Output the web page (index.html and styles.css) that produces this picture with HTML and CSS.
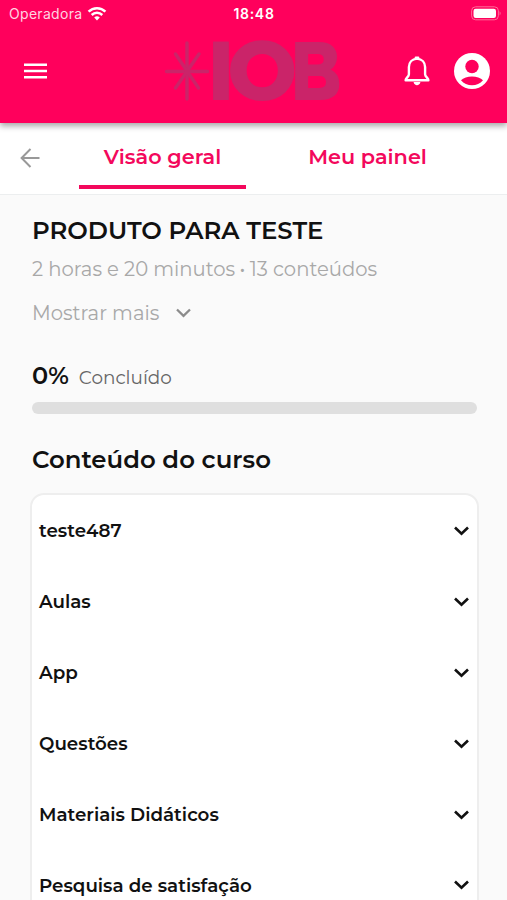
FILE: index.html
```html
<!DOCTYPE html>
<html lang="pt-BR">
<head>
    <meta charset="UTF-8">
    <meta name="viewport" content="width=device-width, initial-scale=1.0">
    <title>IOB - Curso</title>
    <link rel="stylesheet" href="styles.css">
</head>
<body>
    <header class="header">
        <div class="status-bar">
            <div class="carrier">
                <span>Operadora</span>
                <svg width="20" height="15" viewBox="0 0 20 15" fill="none" stroke="#fff" stroke-width="2.5">
                    <path d="M1.6 5.6a12 12 0 0 1 16.8 0"/>
                    <path d="M4.7 9a7.6 7.6 0 0 1 10.6 0"/>
                    <path d="M10 14.4l-2.8-2.9a4 4 0 0 1 5.6 0z" fill="#fff" stroke="none"/>
                </svg>
            </div>
            <span class="clock">18:48</span>
            <svg class="battery" width="31" height="15" viewBox="0 0 31 15">
                <rect x=".6" y=".8" width="26.8" height="13" rx="4" fill="none" stroke="#ff6b99" stroke-width="1"/>
                <rect x="2.5" y="2.7" width="22.5" height="9.2" rx="2.2" fill="#fff"/>
                <path d="M28.6 5.2q2 2.1 0 4.2z" fill="#ff6b99"/>
            </svg>
        </div>
        <div class="nav-bar">
            <button class="icon-btn" aria-label="Menu">
                <svg width="23" height="16" viewBox="0 0 23 16" stroke="#fff" stroke-width="2.5">
                    <path d="M0 1.7h23M0 8h23M0 14.3h23"/>
                </svg>
            </button>
            <svg class="logo" width="180" height="88" viewBox="0 0 180 88">
                <g fill="none" stroke="#ca2469" stroke-width="3.4" stroke-linecap="round">
                    <path d="M23 16v56M2.5 44.5h41"/>
                    <path d="M11.5 27l23 34M35 27L11.5 61"/>
                </g>
                <g class="logo-text">
                    <text x="43.5" y="73" textLength="27" lengthAdjust="spacingAndGlyphs">I</text>
                    <text x="63.2" y="73" textLength="70" lengthAdjust="spacingAndGlyphs">O</text>
                    <text x="126.5" y="73" textLength="51" lengthAdjust="spacingAndGlyphs">B</text>
                </g>
            </svg>
            <div class="actions">
                <button class="icon-btn" aria-label="Notificações">
                    <svg width="28" height="32" viewBox="0 0 28 32" fill="none" stroke="#fff" stroke-width="2.4" stroke-linejoin="round">
                        <path d="M14 3.6C8.9 4 6 7.4 5.9 12v7.2c0 2.6-3.3 3.6-3.3 6.1h22.8c0-2.5-3.3-3.5-3.3-6.1V12C22 7.4 19.1 4 14 3.6z"/>
                        <path d="M12.8 2.8h2.4z"/>
                        <path d="M10.6 27h6.8c-.5 4.2-6.3 4.2-6.8 0z" fill="#fff" stroke="none"/>
                    </svg>
                </button>
                <button class="icon-btn" aria-label="Perfil">
                    <svg width="36" height="36" viewBox="0 0 36 36">
                        <circle cx="18" cy="18" r="18" fill="#fff"/>
                        <circle cx="18" cy="13.5" r="6.7" fill="#ff005c"/>
                        <path d="M7 27.3c4.5-5.2 17.5-5.2 22 0-5.2 6.6-16.8 6.6-22 0z" fill="#ff005c"/>
                    </svg>
                </button>
            </div>
        </div>
    </header>

    <nav class="tabs">
        <button class="back" aria-label="Voltar">
            <svg width="20" height="20" viewBox="0 0 20 20" fill="none" stroke="#999" stroke-width="2">
                <path d="M19.5 10H2M10.5 1L1.6 10l8.9 9"/>
            </svg>
        </button>
        <a class="tab active">Visão geral</a>
        <a class="tab panel">Meu painel</a>
    </nav>

    <main class="content">
        <h1>PRODUTO PARA TESTE</h1>
        <p class="details">2 horas e 20 minutos <b>•</b> 13 conteúdos</p>
        <button class="show-more">
            <span>Mostrar mais</span>
            <svg width="15" height="10" viewBox="0 0 15 10" fill="none" stroke="#8c8c8c" stroke-width="2.3">
                <path d="M1 1.5l6.5 6.3L14 1.5"/>
            </svg>
        </button>

        <div class="progress-label">
            <strong>0%</strong>
            <span>Concluído</span>
        </div>
        <div class="progress"></div>

        <h2>Conteúdo do curso</h2>
        <ul class="modules">
            <li>teste487<svg class="chevron" viewBox="0 0 15 10"><path d="M1 1.5l6.5 6.3L14 1.5"/></svg></li>
            <li>Aulas<svg class="chevron" viewBox="0 0 15 10"><path d="M1 1.5l6.5 6.3L14 1.5"/></svg></li>
            <li>App<svg class="chevron" viewBox="0 0 15 10"><path d="M1 1.5l6.5 6.3L14 1.5"/></svg></li>
            <li>Questões<svg class="chevron" viewBox="0 0 15 10"><path d="M1 1.5l6.5 6.3L14 1.5"/></svg></li>
            <li>Materiais Didáticos<svg class="chevron" viewBox="0 0 15 10"><path d="M1 1.5l6.5 6.3L14 1.5"/></svg></li>
            <li>Pesquisa de satisfação<svg class="chevron" viewBox="0 0 15 10"><path d="M1 1.5l6.5 6.3L14 1.5"/></svg></li>
        </ul>
    </main>
</body>
</html>
```
FILE: styles.css
```css
* {
    box-sizing: border-box;
    margin: 0;
    padding: 0;
}

body {
    font-family: "Montserrat", "Inter", sans-serif;
    background: #fafafa;
    color: #111;
    height: 900px;
    overflow: hidden;
}

button {
    border: none;
    background: none;
    font: inherit;
    cursor: pointer;
}

svg {
    display: block;
    flex-shrink: 0;
}

.header {
    position: relative;
    height: 123px;
    background: #ff005c;
    color: white;
    box-shadow: 0 3px 6px rgba(0, 0, 0, 0.35);
}

.status-bar {
    display: grid;
    grid-template-columns: 1fr auto 1fr;
    align-items: center;
    height: 27px;
    padding: 0 5px 0 9px;
    font-family: "Inter", sans-serif;
    font-size: 14px;
}

.carrier {
    display: flex;
    align-items: center;
    gap: 5px;
    color: #ffd3e1;
    letter-spacing: 0.3px;
}

.clock {
    margin-right: 3px;
    font-weight: 600;
    letter-spacing: 0.7px;
}

.battery {
    justify-self: end;
}

.nav-bar {
    display: grid;
    grid-template-columns: 140px 1fr auto;
    align-items: center;
    height: 88px;
    padding: 0 17px 0 24px;
}

.logo {
    overflow: visible;
}

.logo-text {
    font-size: 84px;
    font-weight: 800;
    fill: #ca2469;
}

.actions {
    display: flex;
    align-items: center;
    justify-content: flex-end;
    gap: 23px;
}

.tabs {
    display: flex;
    height: 72px;
    padding-left: 20px;
    background: white;
    border-bottom: 1px solid #eceeef;
}

.back {
    width: 59px;
    padding-bottom: 1px;
}

.tab {
    width: 167px;
    height: 66px;
    line-height: 67px;
    text-align: center;
    font-size: 20.8px;
    font-weight: 600;
    color: #f3085c;
}

.tab.active {
    border-bottom: 4px solid #f3085c;
}

.tab.panel {
    margin-left: 38px;
}

.content {
    padding: 19px 30px 0 32px;
}

h1 {
    font-size: 24.4px;
    font-weight: 600;
    line-height: 32px;
}

.details {
    margin-top: 10px;
    font-size: 19.6px;
    line-height: 27px;
    color: #a8a8a8;
    white-space: nowrap;
}

.details b {
    font-size: 12px;
    vertical-align: 2px;
}

.show-more {
    display: flex;
    align-items: center;
    gap: 17px;
    margin-top: 17px;
    font-size: 19.6px;
    line-height: 26px;
    color: #a8a8a8;
}

.progress-label {
    display: flex;
    align-items: baseline;
    gap: 10px;
    height: 32px;
    margin-top: 34px;
    line-height: 32px;
}

.progress-label strong {
    font-size: 24px;
    font-weight: 600;
}

.progress-label span {
    font-size: 18.4px;
    color: #666;
}

.progress {
    height: 12px;
    margin-top: 10px;
    border-radius: 6px;
    background: #dfdfdf;
}

h2 {
    margin-top: 29px;
    font-size: 24.4px;
    font-weight: 600;
    line-height: 32px;
}

.modules {
    margin: 18px -2px 0 -2px;
    border: 2px solid #eee;
    border-radius: 14px;
    background: white;
    list-style: none;
}

.modules li {
    display: flex;
    align-items: center;
    justify-content: space-between;
    height: 70.9px;
    padding: 1px 8px 0 7px;
    font-size: 18.3px;
    font-weight: 600;
}

.chevron {
    width: 15px;
    height: 10px;
    fill: none;
    stroke: #111;
    stroke-width: 2.6;
}
```
